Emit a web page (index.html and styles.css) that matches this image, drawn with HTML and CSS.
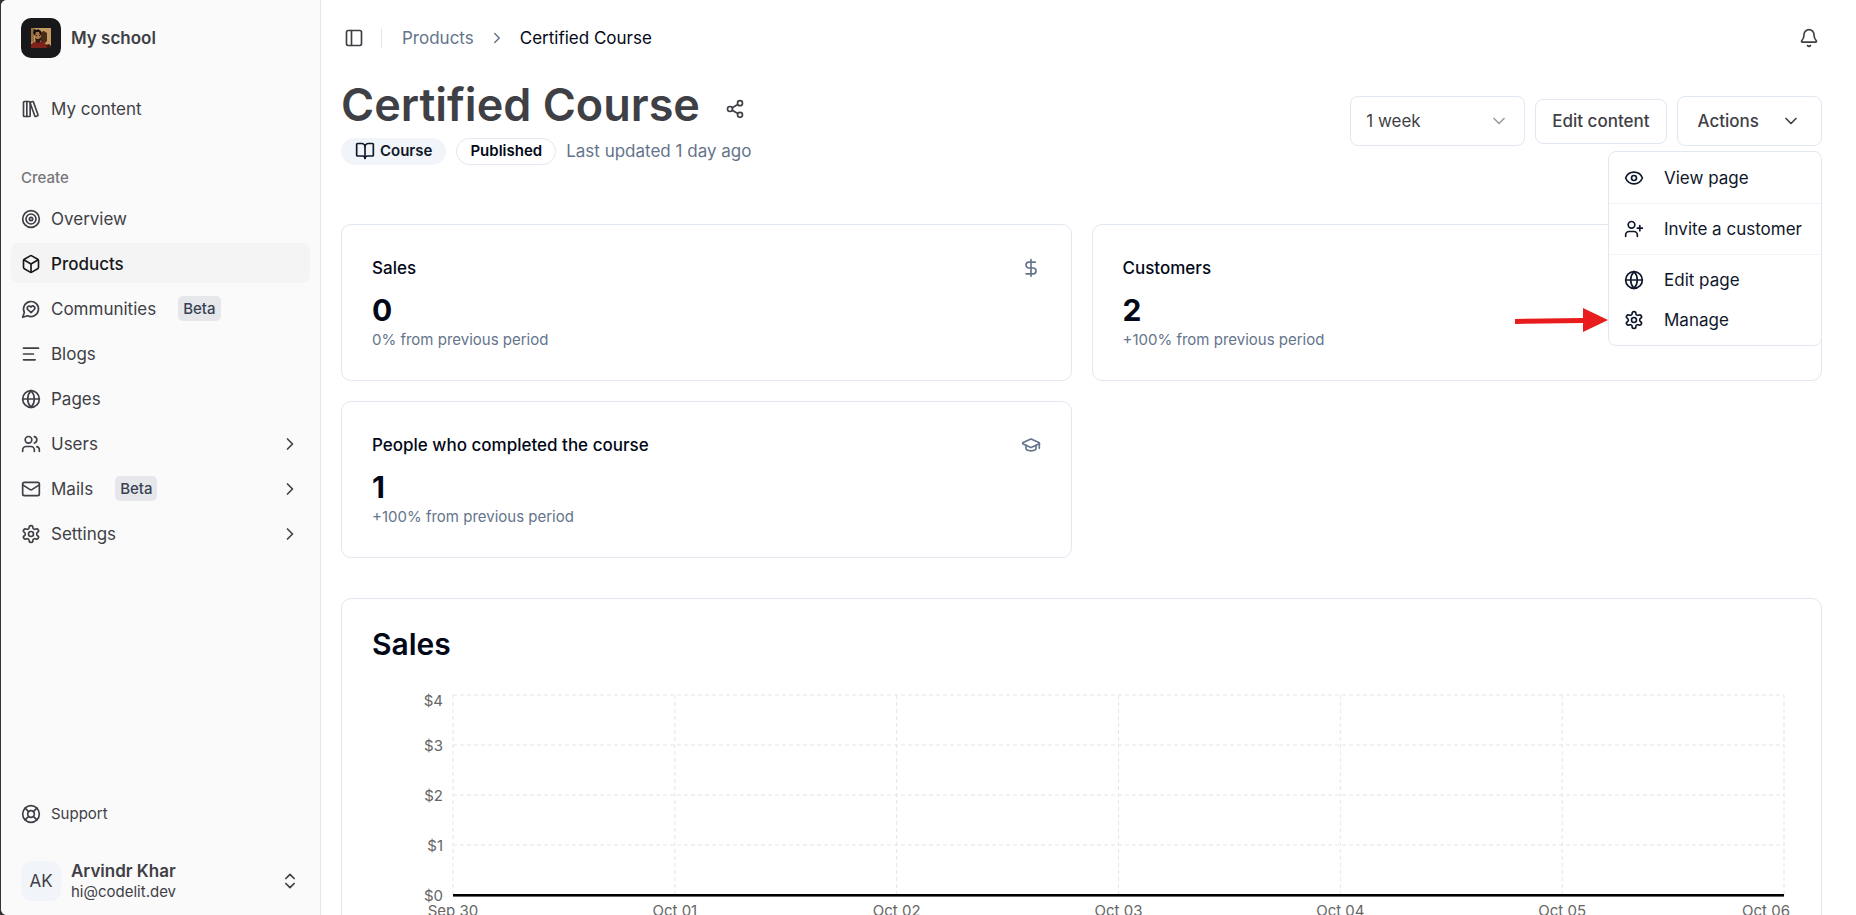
FILE: index.html
```html
<!DOCTYPE html>
<html lang="en">
<head>
<meta charset="utf-8">
<title>Certified Course</title>
<meta name="viewport" content="width=device-width, initial-scale=1">
<link rel="stylesheet" href="styles.css">
</head>
<body>
<svg class="sprite" aria-hidden="true">
  <symbol id="library" viewBox="0 0 24 24"><rect width="8" height="18" x="3" y="3" rx="1"/><path d="M7 3v18"/><path d="M20.4 18.9c.2.5-.1 1.1-.6 1.3l-1.9.7c-.5.2-1.1-.1-1.3-.6L11.1 5.1c-.2-.5.1-1.1.6-1.3l1.9-.7c.5-.2 1.1.1 1.3.6Z"/></symbol>
  <symbol id="target" viewBox="0 0 24 24"><circle cx="12" cy="12" r="10"/><circle cx="12" cy="12" r="6"/><circle cx="12" cy="12" r="2"/></symbol>
  <symbol id="box" viewBox="0 0 24 24"><path d="M21 8a2 2 0 0 0-1-1.73l-7-4a2 2 0 0 0-2 0l-7 4A2 2 0 0 0 3 8v8a2 2 0 0 0 1 1.73l7 4a2 2 0 0 0 2 0l7-4A2 2 0 0 0 21 16Z"/><path d="m3.3 7 8.7 5 8.7-5"/><path d="M12 22V12"/></symbol>
  <symbol id="community" viewBox="0 0 24 24"><path d="M7.9 20A9 9 0 1 0 4 16.1L2 22Z"/><path d="M15.8 9.2a2.5 2.5 0 0 0-3.5 0l-.3.4-.35-.3a2.42 2.42 0 1 0-3.2 3.6l3.6 3.5 3.6-3.5c1.2-1.2 1.1-2.7.2-3.7"/></symbol>
  <symbol id="text" viewBox="0 0 24 24"><path d="M21 5H3M15 12H3M17 19H3"/></symbol>
  <symbol id="globe" viewBox="0 0 24 24"><circle cx="12" cy="12" r="10"/><path d="M12 2a14.5 14.5 0 0 0 0 20 14.5 14.5 0 0 0 0-20"/><path d="M2 12h20"/></symbol>
  <symbol id="users" viewBox="0 0 24 24"><path d="M16 21v-2a4 4 0 0 0-4-4H6a4 4 0 0 0-4 4v2"/><circle cx="9" cy="7" r="4"/><path d="M22 21v-2a4 4 0 0 0-3-3.87"/><path d="M16 3.13a4 4 0 0 1 0 7.75"/></symbol>
  <symbol id="mail" viewBox="0 0 24 24"><rect width="20" height="16" x="2" y="4" rx="2"/><path d="m22 7-8.97 5.7a1.94 1.94 0 0 1-2.06 0L2 7"/></symbol>
  <symbol id="settings" viewBox="0 0 24 24"><path d="M12.22 2h-.44a2 2 0 0 0-2 2v.18a2 2 0 0 1-1 1.73l-.43.25a2 2 0 0 1-2 0l-.15-.08a2 2 0 0 0-2.73.73l-.22.38a2 2 0 0 0 .73 2.73l.15.1a2 2 0 0 1 1 1.72v.51a2 2 0 0 1-1 1.74l-.15.09a2 2 0 0 0-.73 2.73l.22.38a2 2 0 0 0 2.73.73l.15-.08a2 2 0 0 1 2 0l.43.25a2 2 0 0 1 1 1.73V20a2 2 0 0 0 2 2h.44a2 2 0 0 0 2-2v-.18a2 2 0 0 1 1-1.73l.43-.25a2 2 0 0 1 2 0l.15.08a2 2 0 0 0 2.73-.73l.22-.39a2 2 0 0 0-.73-2.73l-.15-.08a2 2 0 0 1-1-1.74v-.5a2 2 0 0 1 1-1.74l.15-.09a2 2 0 0 0 .73-2.73l-.22-.38a2 2 0 0 0-2.73-.73l-.15.08a2 2 0 0 1-2 0l-.43-.25a2 2 0 0 1-1-1.73V4a2 2 0 0 0-2-2z"/><circle cx="12" cy="12" r="3"/></symbol>
  <symbol id="buoy" viewBox="0 0 24 24"><circle cx="12" cy="12" r="10"/><path d="m4.93 4.93 4.24 4.24M14.83 9.17l4.24-4.24M14.83 14.83l4.24 4.24M9.17 14.83l-4.24 4.24"/><circle cx="12" cy="12" r="4"/></symbol>
  <symbol id="chevron-right" viewBox="0 0 24 24"><path d="m9 18 6-6-6-6"/></symbol>
  <symbol id="chevron-down" viewBox="0 0 24 24"><path d="m6 9 6 6 6-6"/></symbol>
  <symbol id="chevrons" viewBox="0 0 24 24"><path d="m7 15 5 5 5-5"/><path d="m7 9 5-5 5 5"/></symbol>
  <symbol id="panel" viewBox="0 0 24 24"><rect width="18" height="18" x="3" y="3" rx="2"/><path d="M9 3v18"/></symbol>
  <symbol id="bell" viewBox="0 0 24 24"><path d="M10.27 21a2 2 0 0 0 3.46 0"/><path d="M3.26 15.33A1 1 0 0 0 4 17h16a1 1 0 0 0 .74-1.67C19.41 13.96 18 12.5 18 8A6 6 0 0 0 6 8c0 4.5-1.41 5.96-2.74 7.33"/></symbol>
  <symbol id="share" viewBox="0 0 24 24"><circle cx="18" cy="5" r="3"/><circle cx="6" cy="12" r="3"/><circle cx="18" cy="19" r="3"/><path d="m8.59 13.51 6.83 3.98M15.41 6.51l-6.82 3.98"/></symbol>
  <symbol id="book" viewBox="0 0 24 24"><path d="M12 7v14"/><path d="M3 18a1 1 0 0 1-1-1V4a1 1 0 0 1 1-1h5a4 4 0 0 1 4 4 4 4 0 0 1 4-4h5a1 1 0 0 1 1 1v13a1 1 0 0 1-1 1h-6a3 3 0 0 0-3 3 3 3 0 0 0-3-3z"/></symbol>
  <symbol id="dollar" viewBox="0 0 24 24"><path d="M12 2v20"/><path d="M17 5H9.5a3.5 3.5 0 0 0 0 7h5a3.5 3.5 0 0 1 0 7H6"/></symbol>
  <symbol id="cap" viewBox="0 0 24 24"><path d="M21.42 10.92a1 1 0 0 0-.02-1.84L12.83 5.18a2 2 0 0 0-1.66 0L2.6 9.08a1 1 0 0 0 0 1.83l8.57 3.91a2 2 0 0 0 1.66 0z"/><path d="M22 10v6"/><path d="M6 12.5V16a6 3 0 0 0 12 0v-3.5"/></symbol>
  <symbol id="eye" viewBox="0 0 24 24"><path d="M2.06 12.35a1 1 0 0 1 0-.7 10.75 10.75 0 0 1 19.88 0 1 1 0 0 1 0 .7 10.75 10.75 0 0 1-19.88 0"/><circle cx="12" cy="12" r="3"/></symbol>
  <symbol id="user-plus" viewBox="0 0 24 24"><path d="M16 21v-2a4 4 0 0 0-4-4H6a4 4 0 0 0-4 4v2"/><circle cx="9" cy="7" r="4"/><path d="M19 8v6M22 11h-6"/></symbol>
</svg>

<div class="app">
  <aside class="sidebar">
    <a class="identity" href="#">
      <span class="logo">
        <svg viewBox="0 0 20 20" aria-hidden="true">
          <rect width="20" height="20" fill="#c49a63"/>
          <rect width="3" height="14" fill="#94703f"/>
          <path d="M10 4l3-1 3 2v8l-2 2h-4z" fill="#4a2d18"/>
          <path d="M0 16l5-3 7 1 4 3v3H0z" fill="#7e231b"/>
          <path d="M15 17l3-1 2 2v2h-4z" fill="#3a1a14"/>
          <path d="M4 4h6v8l-2 2-4-2z" fill="#a9764a"/>
          <path d="M3 1l3 1 1-1 3 2v4H9L8 4H5L4 8 2 5z" fill="#1b1210"/>
          <path d="M4 10l2 1h2l2-2v3l-2 3-3-1z" fill="#2a1a12"/>
          <path d="M5 7h1v1H5zM8 7h1v1H8z" fill="#3a2113"/>
        </svg>
      </span>
      <span class="strong">My school</span>
    </a>

    <nav class="nav" aria-label="Main">
      <ul class="nav-list">
        <li><a class="nav-item" href="#"><svg class="icon"><use href="#library"/></svg>My content</a></li>
      </ul>
      <h2 class="nav-label">Create</h2>
      <ul class="nav-list">
        <li><a class="nav-item" href="#"><svg class="icon"><use href="#target"/></svg>Overview</a></li>
        <li><a class="nav-item is-active" href="#" aria-current="page"><svg class="icon"><use href="#box"/></svg>Products</a></li>
        <li><a class="nav-item" href="#"><svg class="icon"><use href="#community"/></svg>Communities<span class="beta">Beta</span></a></li>
        <li><a class="nav-item" href="#"><svg class="icon"><use href="#text"/></svg>Blogs</a></li>
        <li><a class="nav-item" href="#"><svg class="icon"><use href="#globe"/></svg>Pages</a></li>
        <li><button class="nav-item" type="button"><svg class="icon"><use href="#users"/></svg>Users<svg class="icon end"><use href="#chevron-right"/></svg></button></li>
        <li><button class="nav-item" type="button"><svg class="icon"><use href="#mail"/></svg>Mails<span class="beta">Beta</span><svg class="icon end"><use href="#chevron-right"/></svg></button></li>
        <li><button class="nav-item" type="button"><svg class="icon"><use href="#settings"/></svg>Settings<svg class="icon end"><use href="#chevron-right"/></svg></button></li>
      </ul>
    </nav>

    <a class="nav-item support" href="#"><svg class="icon"><use href="#buoy"/></svg>Support</a>
    <button class="identity account" type="button">
      <span class="avatar">AK</span>
      <span class="account-text"><span class="strong">Arvindr Khar</span><span class="email">hi@codelit.dev</span></span>
      <svg class="icon end"><use href="#chevrons"/></svg>
    </button>
  </aside>

  <main class="main">
    <header class="topbar">
      <button class="icon-button" type="button" aria-label="Toggle sidebar"><svg class="icon"><use href="#panel"/></svg></button>
      <span class="divider"></span>
      <nav class="crumbs" aria-label="Breadcrumb">
        <a href="#">Products</a>
        <svg class="icon small"><use href="#chevron-right"/></svg>
        <span class="current">Certified Course</span>
      </nav>
      <button class="icon-button end" type="button" aria-label="Notifications"><svg class="icon"><use href="#bell"/></svg></button>
    </header>

    <section class="heading">
      <div>
        <div class="title-row">
          <h1>Certified Course</h1>
          <button class="icon-button" type="button" aria-label="Share"><svg class="icon"><use href="#share"/></svg></button>
        </div>
        <div class="meta">
          <span class="badge filled"><svg class="icon"><use href="#book"/></svg>Course</span>
          <span class="badge">Published</span>
          <span class="muted">Last updated 1 day ago</span>
        </div>
      </div>
      <div class="tools">
        <span class="select">
          <select aria-label="Period"><option>1 week</option></select>
          <svg class="icon"><use href="#chevron-down"/></svg>
        </span>
        <button class="button" type="button">Edit content</button>
        <div class="actions">
          <button class="button tall" type="button" aria-expanded="true">Actions<svg class="icon"><use href="#chevron-down"/></svg></button>
          <div class="menu">
            <div class="menu-group"><a href="#"><svg class="icon"><use href="#eye"/></svg>View page</a></div>
            <div class="menu-group"><a href="#"><svg class="icon"><use href="#user-plus"/></svg>Invite a customer</a></div>
            <div class="menu-group">
              <a href="#"><svg class="icon"><use href="#globe"/></svg>Edit page</a>
              <a href="#"><svg class="icon"><use href="#settings"/></svg>Manage</a>
            </div>
            <svg class="pointer" viewBox="0 0 94 26" aria-hidden="true"><path d="M0 12l68-1V1l25 12-25 12v-9L0 17z"/></svg>
          </div>
        </div>
      </div>
    </section>

    <section class="cards">
      <article class="card">
        <div class="card-head"><h3>Sales</h3><svg class="icon"><use href="#dollar"/></svg></div>
        <p class="value">0</p>
        <p class="change">0% from previous period</p>
      </article>
      <article class="card">
        <div class="card-head"><h3>Customers</h3><svg class="icon"><use href="#users"/></svg></div>
        <p class="value">2</p>
        <p class="change">+100% from previous period</p>
      </article>
      <article class="card">
        <div class="card-head"><h3>People who completed the course</h3><svg class="icon"><use href="#cap"/></svg></div>
        <p class="value">1</p>
        <p class="change">+100% from previous period</p>
      </article>
    </section>

    <section class="card chart-card">
      <h2>Sales</h2>
      <div class="chart">
        <svg class="plot" role="img" aria-label="Sales from Sep 30 to Oct 06">
          <g class="grid">
            <line x1="0" x2="100%" y1="0" y2="0"/><line x1="0" x2="100%" y1="25%" y2="25%"/><line x1="0" x2="100%" y1="50%" y2="50%"/><line x1="0" x2="100%" y1="75%" y2="75%"/>
            <line x1="0" x2="0" y1="0" y2="100%"/><line x1="16.667%" x2="16.667%" y1="0" y2="100%"/><line x1="33.333%" x2="33.333%" y1="0" y2="100%"/><line x1="50%" x2="50%" y1="0" y2="100%"/><line x1="66.667%" x2="66.667%" y1="0" y2="100%"/><line x1="83.333%" x2="83.333%" y1="0" y2="100%"/><line x1="100%" x2="100%" y1="0" y2="100%"/>
          </g>
          <rect class="axis" y="100%" width="100%" height="2"/>
          <line class="series" x1="0" x2="100%" y1="100%" y2="100%"/>
          <g class="y-axis">
            <text x="-10" y="0" dy="11">$4</text><text x="-10" y="25%" dy="6">$3</text><text x="-10" y="50%" dy="6">$2</text><text x="-10" y="75%" dy="6">$1</text><text x="-10" y="100%" dy="6">$0</text>
          </g>
          <g class="x-axis">
            <text x="0" y="100%" dy="21">Sep 30</text><text x="16.667%" y="100%" dy="21">Oct 01</text><text x="33.333%" y="100%" dy="21">Oct 02</text><text x="50%" y="100%" dy="21">Oct 03</text><text x="66.667%" y="100%" dy="21">Oct 04</text><text x="83.333%" y="100%" dy="21">Oct 05</text><text class="last" x="100%" y="100%" dx="6" dy="21">Oct 06</text>
          </g>
        </svg>
      </div>
    </section>
  </main>
</div>
</body>
</html>
```

FILE: styles.css
```css
:root {
  --ink: #020817;
  --text: #3f3f46;
  --muted: #64748b;
  --line: #e2e8f0;
  --base: 17px;
  --small: 15px;
}

* { box-sizing: border-box; }

body {
  margin: 0;
  background: #333336;
  color: var(--text);
  font-family: Inter, "Liberation Sans", sans-serif;
  font-size: var(--base);
  line-height: 24px;
}

h1, h2, h3, p, ul { margin: 0; padding: 0; }
ul { list-style: none; }
a { color: inherit; text-decoration: none; }

button, select {
  border: 0;
  padding: 0;
  background: none;
  color: inherit;
  font: inherit;
  cursor: pointer;
}

.sprite { display: none; }

.icon {
  width: 20px;
  height: 20px;
  flex: none;
  fill: none;
  stroke: currentColor;
  stroke-width: 2;
  stroke-linecap: round;
  stroke-linejoin: round;
}

.icon.small { width: 18px; height: 18px; }
.end { margin-left: auto; }

.app {
  display: flex;
  height: 100vh;
  margin-left: 1px;
  overflow: hidden;
  border-radius: 6px 0 0 6px;
  background: #fff;
}

/* Sidebar */
.sidebar {
  display: flex;
  flex: none;
  flex-direction: column;
  width: 320px;
  padding: 8px 10px 4px;
  border-right: 1px solid var(--line);
  background: #fafafa;
}

.identity {
  display: flex;
  align-items: center;
  gap: 10px;
  width: 100%;
  height: 60px;
  padding: 0 10px;
  text-align: left;
}

.strong { font-weight: 600; }

.logo, .avatar {
  display: grid;
  flex: none;
  place-items: center;
  width: 40px;
  height: 40px;
  border-radius: 10px;
}

.logo { background: #18181b; }
.logo svg { width: 20px; height: 20px; }
.avatar { background: #f1f5f9; }

.nav { flex: 1; padding-top: 20px; }

.nav-list { display: grid; gap: 5px; }

.nav-label {
  margin-top: 30px;
  padding: 0 10px;
  color: #75757b;
  font-size: var(--small);
  font-weight: 500;
  line-height: 40px;
}

.nav-item {
  display: flex;
  align-items: center;
  gap: 10px;
  width: 100%;
  height: 40px;
  padding: 1px 10px 0;
  border-radius: 8px;
}

.nav-item.is-active { background: #f4f4f5; color: #18181b; font-weight: 500; }

.beta {
  margin-left: 12px;
  padding: 0 5px;
  border-radius: 5px;
  background: #e5e7eb;
  color: #374151;
  font-size: var(--small);
  font-weight: 500;
  line-height: 25px;
}

.support { height: 35px; margin-bottom: 20px; font-size: var(--small); }
.account-text { display: grid; }
.account-text .strong { line-height: 22px; }
.email { font-size: var(--small); line-height: 20px; }

/* Main column */
.main { flex: 1; min-width: 0; padding: 0 34px 20px 20px; }

.topbar { display: flex; align-items: center; height: 76px; }
.icon-button { display: flex; padding: 3px; }
.divider { width: 1px; height: 20px; margin: 0 20px 0 14px; background: var(--line); }
.crumbs { display: flex; align-items: center; gap: 14px; color: var(--muted); }
.current { color: var(--ink); }

.heading { display: flex; justify-content: space-between; align-items: center; }
.title-row { display: flex; align-items: flex-end; gap: 22px; height: 60px; padding-bottom: 2px; }
.title-row .icon-button { margin-bottom: 12px; }
h1 { font-size: 45px; font-weight: 600; line-height: 58px; }
.meta { display: flex; align-items: center; gap: 10px; height: 30px; }

.badge {
  display: flex;
  align-items: center;
  gap: 5px;
  height: 27px;
  padding: 0 13px;
  border: 1px solid var(--line);
  border-radius: 14px;
  color: var(--ink);
  font-size: var(--small);
  font-weight: 600;
}

.badge.filled { border-color: #f1f5f9; background: #f1f5f9; color: #0f172a; }
.muted { color: var(--muted); }

.tools { display: flex; align-items: center; gap: 10px; }

.select { position: relative; display: flex; }
.select select {
  width: 175px;
  height: 50px;
  padding: 0 15px;
  border: 1px solid var(--line);
  border-radius: 8px;
  appearance: none;
}
.select .icon { position: absolute; top: 15px; right: 16px; opacity: .5; pointer-events: none; }

.button {
  display: flex;
  align-items: center;
  height: 45px;
  padding: 0 16px;
  border: 1px solid var(--line);
  border-radius: 8px;
  font-weight: 500;
}

.button.tall { gap: 22px; height: 50px; padding: 0 20px; }

.actions { position: relative; }

.menu {
  position: absolute;
  top: calc(100% + 5px);
  right: 0;
  min-width: 214px;
  border: 1px solid var(--line);
  border-radius: 8px;
  background: #fff;
  color: #0f172a;
  white-space: nowrap;
}

.menu-group { padding: 5px; }
.menu-group:first-child { padding-top: 6px; }
.menu-group + .menu-group { border-top: 1px solid #f1f5f9; }
.menu-group a { display: flex; align-items: center; gap: 20px; height: 40px; padding: 0 10px; }

.pointer {
  position: absolute;
  right: 100%;
  bottom: 12px;
  width: 94px;
  height: 26px;
  fill: #e81c1c;
}

/* Stat cards */
.cards {
  display: grid;
  grid-template-columns: 1fr 1fr;
  gap: 20px;
  margin-top: 58px;
}

.card { padding: 30px; border: 1px solid var(--line); border-radius: 10px; color: var(--ink); }
.card-head { display: flex; align-items: center; justify-content: space-between; height: 25px; }
.card-head .icon { color: var(--muted); }
h3 { font-size: var(--base); font-weight: 500; }
.value { margin-top: 10px; font-size: 30px; font-weight: 700; line-height: 40px; }
.change { color: var(--muted); font-size: var(--small); line-height: 20px; }

/* Chart */
.chart-card { margin-top: 40px; padding-bottom: 60px; }
.chart-card h2 { font-size: 30px; font-weight: 600; line-height: 30px; }
.chart { padding: 36px 7px 0 81px; }
.plot { display: block; width: 100%; height: 200px; overflow: visible; }
.grid line { stroke: #e5e5e5; stroke-dasharray: 4 3; }
.axis { fill: #666; }
.series { stroke: #000; stroke-width: 2; }
.plot text { fill: #666; font-size: var(--small); }
.y-axis text { text-anchor: end; }
.x-axis text { text-anchor: middle; }
.x-axis .last { text-anchor: end; }
```
